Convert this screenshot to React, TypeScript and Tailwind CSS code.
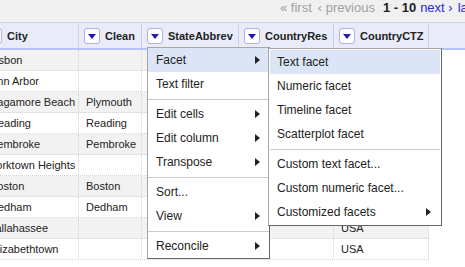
import React from "react";

type Row = [string, string, string, string, string];

const rows: Row[] = [
  ["Lisbon", "", "ME", "USA", "USA"],
  ["Ann Arbor", "", "MI", "USA", "USA"],
  ["Sagamore Beach", "Plymouth", "MA", "USA", "USA"],
  ["Reading", "Reading", "MA", "USA", "USA"],
  ["Pembroke", "Pembroke", "MA", "USA", "USA"],
  ["Yorktown Heights", "", "NY", "USA", "USA"],
  ["Boston", "Boston", "MA", "USA", "USA"],
  ["Dedham", "Dedham", "MA", "USA", "USA"],
  ["Tallahassee", "", "FL", "", "USA"],
  ["Elizabethtown", "", "KY", "", "USA"],
];

const columns = [
  { name: "City", w: "w-[98px]", bw: "w-[96px]" },
  { name: "Clean", w: "w-[63px]", bw: "w-[63px]" },
  { name: "StateAbbrev", w: "w-[97px]", bw: "w-[97px]" },
  { name: "CountryRes", w: "w-[95px]", bw: "w-[95px]" },
  { name: "CountryCTZ", w: "w-[95px]", bw: "w-[95px]" },
];

function DropButton() {
  return (
    <div className="w-[16px] h-[16px] shrink-0 rounded-[3px] border border-[#aab3e4] bg-white flex items-center justify-center">
      <div className="w-0 h-0 border-x-[4px] border-x-transparent border-t-[5px] border-t-[#1e1eb4] mt-[1px]" />
    </div>
  );
}

function Arrow() {
  return <div className="w-0 h-0 border-y-[4px] border-y-transparent border-l-[5px] border-l-[#222]" />;
}

function Item({ label, sub, active, pl }: { label: string; sub?: boolean; active?: boolean; pl: string }) {
  return (
    <div
      className={`h-[24px] flex items-center justify-between ${pl} pr-[9px] text-[12px] text-[#222] whitespace-nowrap ${
        active ? "bg-[#dbe5f5]" : ""
      }`}
    >
      <span>{label}</span>
      {sub && <Arrow />}
    </div>
  );
}

function Sep() {
  return (
    <div className="h-[6px] flex items-center">
      <div className="h-px w-full bg-[#cccccc]" />
    </div>
  );
}

export default function App() {
  return (
    <div className="relative w-[465px] h-[267px] overflow-hidden bg-white font-['Liberation_Sans',Arial,sans-serif]">
      {/* pager */}
      <div className="h-[22px] bg-[#f0f0f0] flex items-start pl-[280px] text-[13px] leading-[15px] whitespace-nowrap">
        <span className="text-[#a0a0a0]">« first</span>
        <span className="ml-[6px] text-[#a0a0a0]">‹ previous</span>
        <span className="ml-[8px] font-bold text-[#222]">1 - 10</span>
        <span className="ml-[4px] text-[#2b2bd0]">next ›</span>
        <span className="ml-[5px] text-[#2b2bd0]">last »</span>
      </div>

      {/* header */}
      <div className="h-[28px] bg-[#e9ecf8] border-t border-t-[#ccd3ef] border-b-2 border-b-[#b7c3ef]">
        <div className="flex h-full -ml-[19px] pt-px">
          {columns.map((c) => (
            <div
              key={c.name}
              className={`${c.w} shrink-0 h-full border-r border-r-[#c9d0ec] flex items-center pl-[5px] gap-[5px]`}
            >
              <DropButton />
              <span className="text-[11px] font-bold text-[#222] whitespace-nowrap">{c.name}</span>
            </div>
          ))}
        </div>
      </div>

      {/* rows */}
      <div>
        {rows.map((r, i) => (
          <div
            key={i}
            className={`flex w-[446px] h-[21px] -ml-[17px] border-b border-dotted border-b-[#d4d4d4] ${
              i % 2 === 0 ? "bg-[#f2f2f2]" : "bg-white"
            }`}
          >
            {r.map((v, j) => (
              <div
                key={j}
                className={`${columns[j].bw} shrink-0 h-full border-r border-dotted border-r-[#d4d4d4] flex items-center pl-[7px] text-[11px] text-[#222] whitespace-nowrap overflow-hidden`}
              >
                {v}
              </div>
            ))}
          </div>
        ))}
      </div>

      {/* column menu */}
      <div className="absolute left-[147px] top-[47px] w-[123px] bg-white border border-[#a6a6a6] border-r-[#666] border-b-[#666] z-10">
        <Item label="Facet" sub active pl="pl-[8px]" />
        <Item label="Text filter" pl="pl-[8px]" />
        <Sep />
        <Item label="Edit cells" sub pl="pl-[8px]" />
        <Item label="Edit column" sub pl="pl-[8px]" />
        <Item label="Transpose" sub pl="pl-[8px]" />
        <Sep />
        <Item label="Sort..." pl="pl-[8px]" />
        <Item label="View" sub pl="pl-[8px]" />
        <Sep />
        <Item label="Reconcile" sub pl="pl-[8px]" />
      </div>

      {/* facet submenu */}
      <div className="absolute left-[268px] top-[48px] w-[174px] p-px bg-white border border-[#a6a6a6] border-r-[#666] border-b-[#666] z-20">
        <Item label="Text facet" active pl="pl-[7px]" />
        <Item label="Numeric facet" pl="pl-[7px]" />
        <Item label="Timeline facet" pl="pl-[7px]" />
        <Item label="Scatterplot facet" pl="pl-[7px]" />
        <Sep />
        <Item label="Custom text facet..." pl="pl-[7px]" />
        <Item label="Custom numeric facet..." pl="pl-[7px]" />
        <Item label="Customized facets" sub pl="pl-[7px]" />
      </div>
    </div>
  );
}
